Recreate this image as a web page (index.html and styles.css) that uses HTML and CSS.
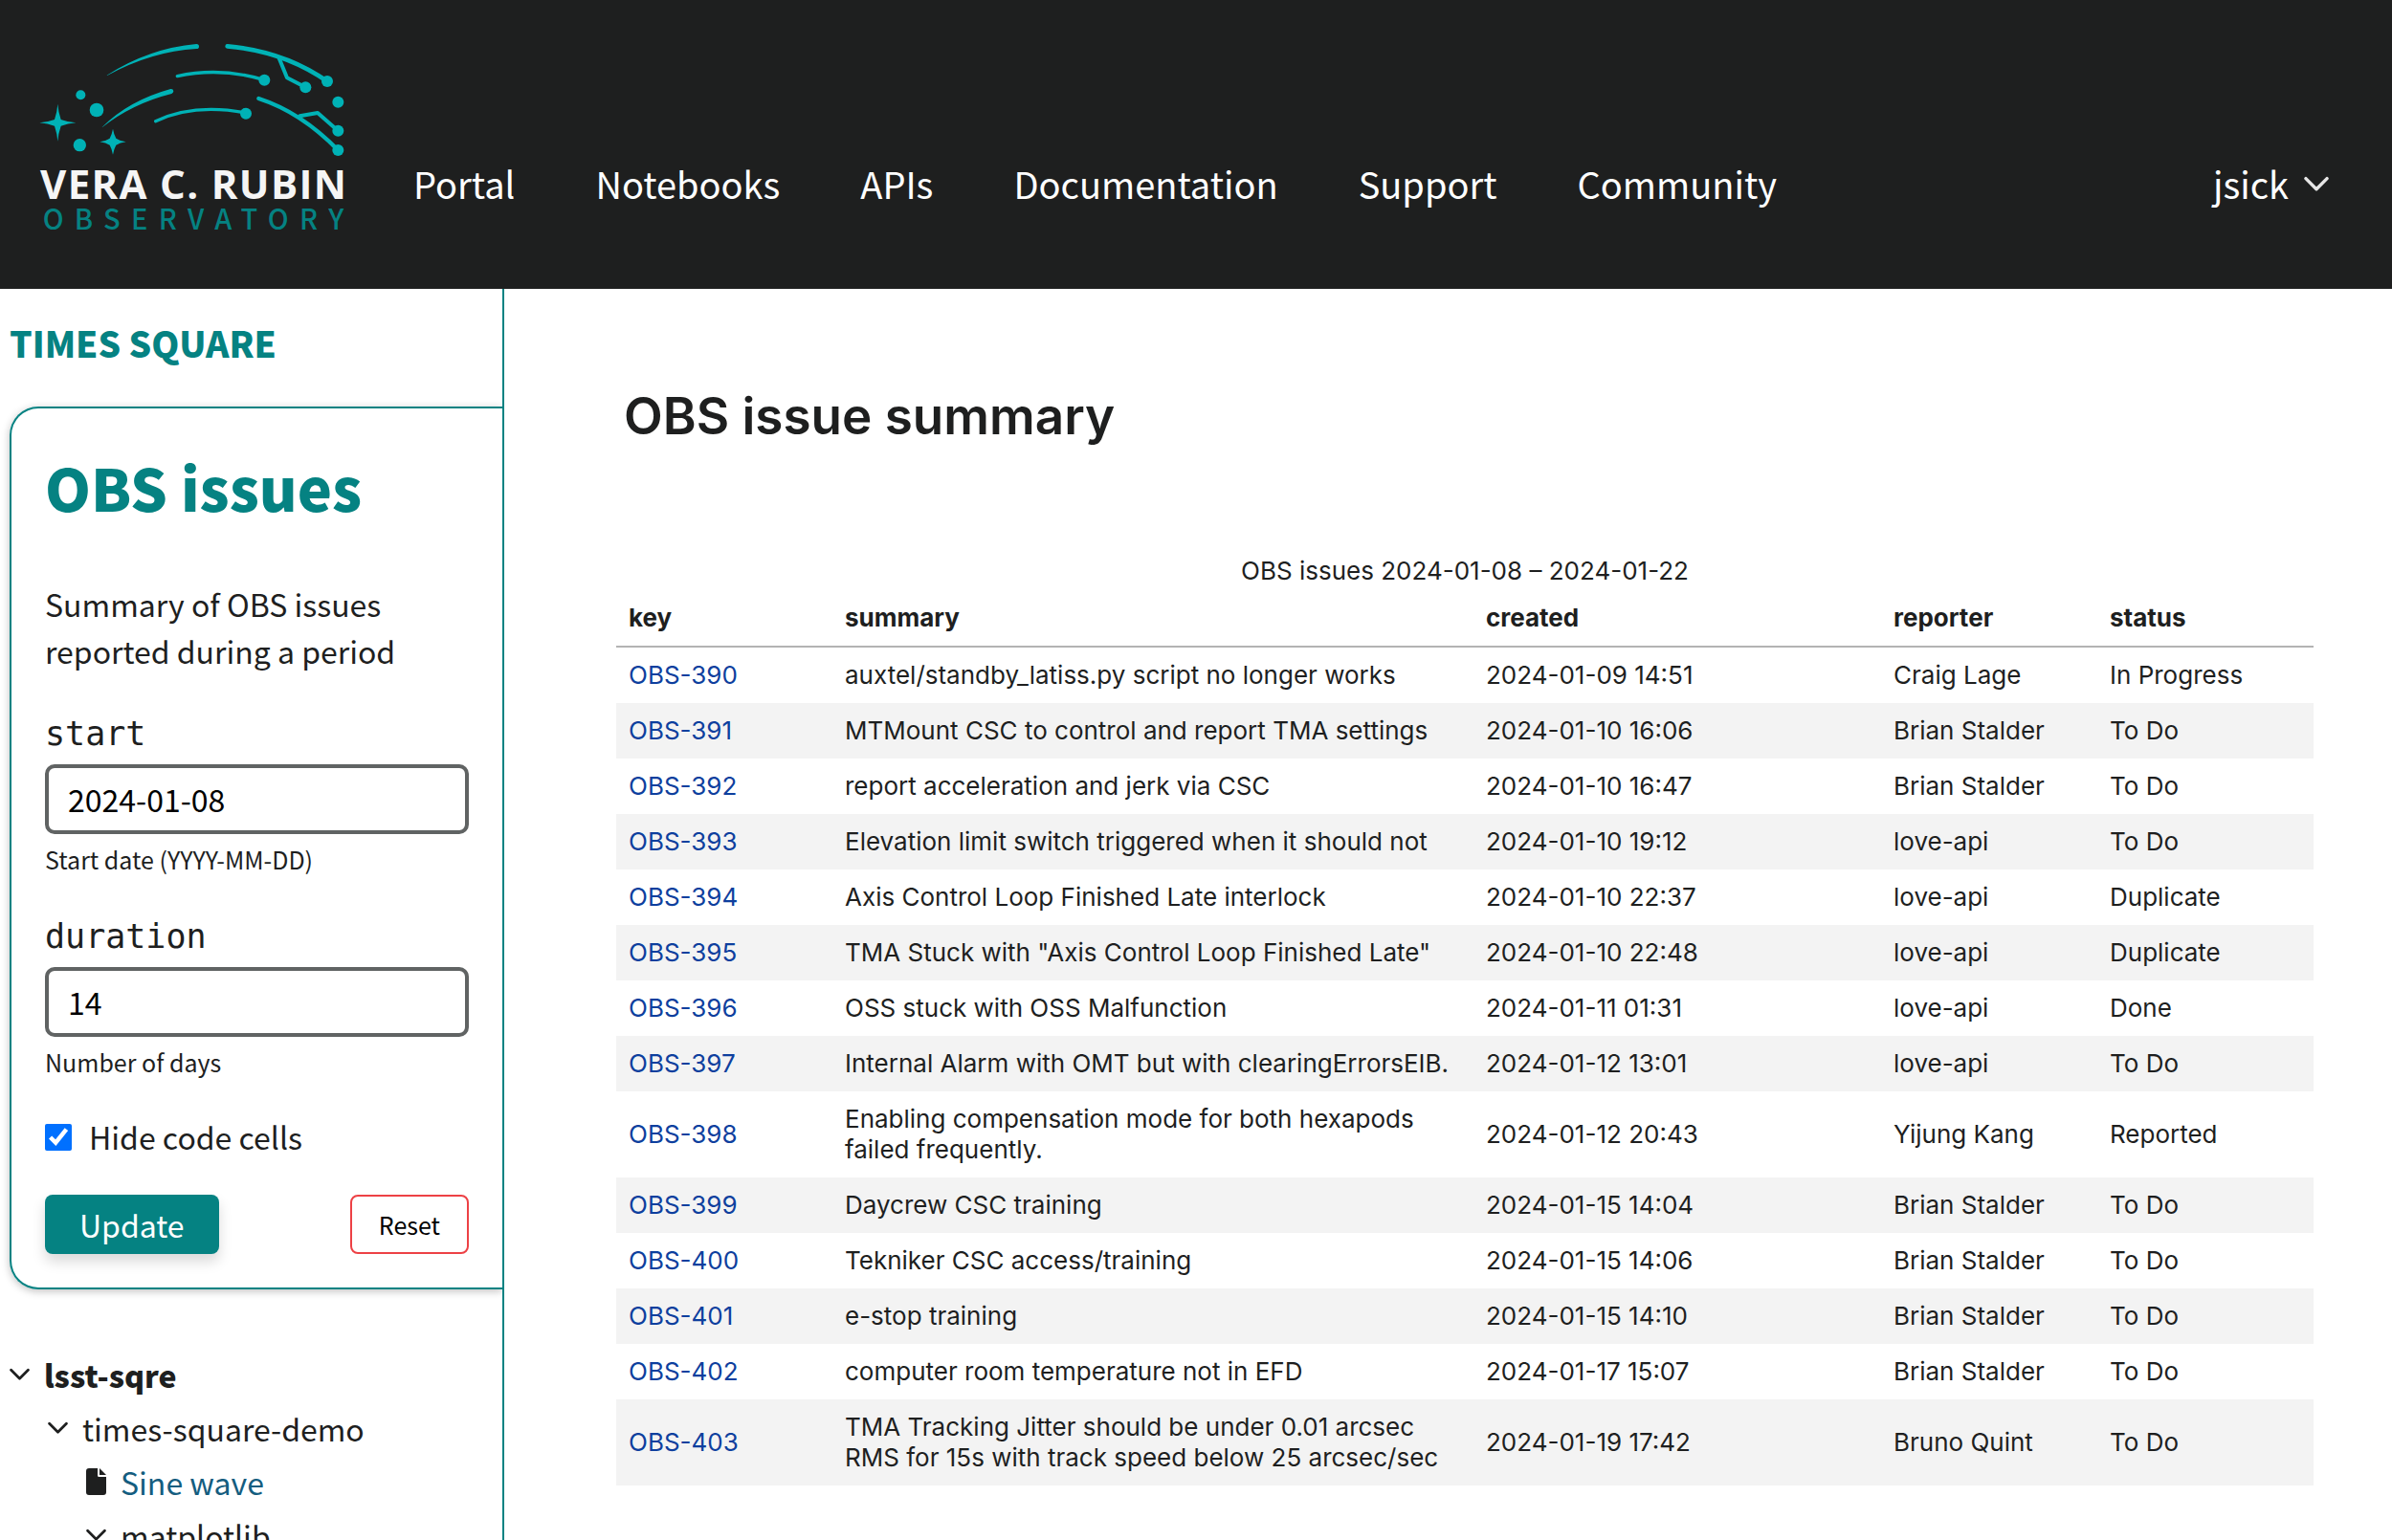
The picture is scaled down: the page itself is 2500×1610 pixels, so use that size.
FILE: index.html
```html
<!DOCTYPE html>
<html lang="en">
<head>
<meta charset="utf-8">
<meta name="viewport" content="width=device-width, initial-scale=1">
<title>OBS issues | Times Square</title>
<link rel="stylesheet" href="styles.css">
</head>
<body>
<svg width="0" height="0" class="sprite" aria-hidden="true">
  <symbol id="chevron" viewBox="0 0 20 13"><path d="M1.500 2 10 10.500 18.500 2" fill="none" stroke="currentColor" stroke-width="2.600" stroke-linecap="round" stroke-linejoin="round"/></symbol>
  <symbol id="file" viewBox="0 0 21 28"><path d="M3 0H12V7.500Q12 9 13.500 9H21V25Q21 28 18 28H3Q0 28 0 25V3Q0 0 3 0Z" fill="currentColor"/><path d="M14 0 21 7H14Z" fill="currentColor"/></symbol>
</svg>

<header class="site-header">
  <a class="logo" href="#" aria-label="Vera C. Rubin Observatory">
    <svg viewBox="0 0 1080 690" class="logo-art">
      <g fill="#00b2b6">
        <path d="M121 236Q123 262 131 285Q152 293 178 295Q152 297 131 305Q123 328 121 353Q119 328 111 305Q90 297 64 295Q90 293 111 285Q119 262 121 236Z"/>
        <path d="M294 314Q297 332 304 344Q316 352 335 355Q316 358 304 365Q297 377 294 395Q291 377 284 365Q272 358 253 355Q272 352 284 344Q291 332 294 314Z"/>
        <circle cx="193" cy="208" r="15"/><circle cx="243" cy="255" r="22"/><circle cx="190" cy="365" r="20"/>
        <circle cx="769" cy="161" r="18"/><circle cx="711" cy="266" r="18"/>
        <circle cx="966" cy="165" r="18"/><circle cx="898" cy="184" r="18"/><circle cx="1000" cy="230" r="18"/>
        <circle cx="1000" cy="320" r="18"/><circle cx="1000" cy="381" r="18"/>
        <path d="M275 146Q408 61 556 48Q564 48 564 56Q564 63 556 63Q415 71 276 147Z"/>
        <path d="M260 309Q342 226 475 189Q483 188 484 196Q484 201 478 204Q355 235 261 309Z"/>
      </g>
      <g fill="none" stroke="#00b2b6" stroke-linecap="round" stroke-linejoin="round">
        <path d="M496 149Q630 119 769 161" stroke-width="10"/>
        <path d="M428 290Q548 233 711 264" stroke-width="10"/>
        <path d="M653 55Q830 70 966 165" stroke-width="14"/>
        <path d="M814 90 840 154 898 184" stroke-width="12"/>
        <path d="M751 219Q884 262 1000 381" stroke-width="13"/>
        <path d="M880 274 936 264 1000 320" stroke-width="12"/>
      </g>
      <text x="66" y="533" class="logo-name">VERA C. RUBIN</text>
      <text x="74" y="630" class="logo-sub">OBSERVATORY</text>
    </svg>
  </a>
  <nav class="main-nav">
    <a href="#">Portal</a>
    <a href="#">Notebooks</a>
    <a href="#">APIs</a>
    <a href="#">Documentation</a>
    <a href="#">Support</a>
    <a href="#">Community</a>
  </nav>
  <button type="button" class="user-menu">jsick <svg class="user-chevron"><use href="#chevron"/></svg></button>
</header>

<div class="layout">
  <aside class="sidebar">
    <p class="app-name">Times Square</p>
    <form class="card">
      <h1>OBS issues</h1>
      <p class="description">Summary of OBS issues reported during a period</p>
      <div class="field">
        <label for="start">start</label>
        <input type="text" id="start" value="2024-01-08">
        <p class="help">Start date (YYYY-MM-DD)</p>
      </div>
      <div class="field">
        <label for="duration">duration</label>
        <input type="text" id="duration" value="14">
        <p class="help">Number of days</p>
      </div>
      <label class="check"><input type="checkbox" checked> Hide code cells</label>
      <div class="actions">
        <button type="submit" class="update">Update</button>
        <button type="reset" class="reset">Reset</button>
      </div>
    </form>
    <ul class="tree">
      <li>
        <div class="node root"><svg class="caret"><use href="#chevron"/></svg>lsst-sqre</div>
        <ul>
          <li>
            <div class="node"><svg class="caret"><use href="#chevron"/></svg>times-square-demo</div>
            <ul>
              <li class="node"><svg class="file"><use href="#file"/></svg><a href="#">Sine wave</a></li>
              <li class="node"><svg class="caret"><use href="#chevron"/></svg>matplotlib</li>
            </ul>
          </li>
        </ul>
      </li>
    </ul>
  </aside>

  <main class="notebook">
    <h2>OBS issue summary</h2>
    <table>
      <caption>OBS issues 2024-01-08 – 2024-01-22</caption>
      <colgroup><col class="narrow"><col><col class="wide"><col class="narrow"><col class="narrow"></colgroup>
      <thead>
        <tr><th scope="col">key</th><th scope="col">summary</th><th scope="col">created</th><th scope="col">reporter</th><th scope="col">status</th></tr>
      </thead>
      <tbody>
        <tr><td><a href="#">OBS-390</a></td><td>auxtel/standby_latiss.py script no longer works</td><td>2024-01-09 14:51</td><td>Craig Lage</td><td>In Progress</td></tr>
        <tr><td><a href="#">OBS-391</a></td><td>MTMount CSC to control and report TMA settings</td><td>2024-01-10 16:06</td><td>Brian Stalder</td><td>To Do</td></tr>
        <tr><td><a href="#">OBS-392</a></td><td>report acceleration and jerk via CSC</td><td>2024-01-10 16:47</td><td>Brian Stalder</td><td>To Do</td></tr>
        <tr><td><a href="#">OBS-393</a></td><td>Elevation limit switch triggered when it should not</td><td>2024-01-10 19:12</td><td>love-api</td><td>To Do</td></tr>
        <tr><td><a href="#">OBS-394</a></td><td>Axis Control Loop Finished Late interlock</td><td>2024-01-10 22:37</td><td>love-api</td><td>Duplicate</td></tr>
        <tr><td><a href="#">OBS-395</a></td><td>TMA Stuck with "Axis Control Loop Finished Late"</td><td>2024-01-10 22:48</td><td>love-api</td><td>Duplicate</td></tr>
        <tr><td><a href="#">OBS-396</a></td><td>OSS stuck with OSS Malfunction</td><td>2024-01-11 01:31</td><td>love-api</td><td>Done</td></tr>
        <tr><td><a href="#">OBS-397</a></td><td>Internal Alarm with OMT but with clearingErrorsEIB.</td><td>2024-01-12 13:01</td><td>love-api</td><td>To Do</td></tr>
        <tr><td><a href="#">OBS-398</a></td><td>Enabling compensation mode for both hexapods failed frequently.</td><td>2024-01-12 20:43</td><td>Yijung Kang</td><td>Reported</td></tr>
        <tr><td><a href="#">OBS-399</a></td><td>Daycrew CSC training</td><td>2024-01-15 14:04</td><td>Brian Stalder</td><td>To Do</td></tr>
        <tr><td><a href="#">OBS-400</a></td><td>Tekniker CSC access/training</td><td>2024-01-15 14:06</td><td>Brian Stalder</td><td>To Do</td></tr>
        <tr><td><a href="#">OBS-401</a></td><td>e-stop training</td><td>2024-01-15 14:10</td><td>Brian Stalder</td><td>To Do</td></tr>
        <tr><td><a href="#">OBS-402</a></td><td>computer room temperature not in EFD</td><td>2024-01-17 15:07</td><td>Brian Stalder</td><td>To Do</td></tr>
        <tr><td><a href="#">OBS-403</a></td><td>TMA Tracking Jitter should be under 0.01 arcsec RMS for 15s with track speed below 25 arcsec/sec</td><td>2024-01-19 17:42</td><td>Bruno Quint</td><td>To Do</td></tr>
      </tbody>
    </table>
  </main>
</div>
</body>
</html>
```
FILE: styles.css
```css
:root {
  --teal: #058282;
  --ink: #1e1f1f;
  --sans: "Noto Sans CJK SC", "Noto Sans", sans-serif;
  --mono: "DejaVu Sans Mono", monospace;
}

* { box-sizing: border-box; }

body {
  margin: 0;
  height: 100vh;
  overflow: hidden;
  display: flex;
  flex-direction: column;
  background: #fff;
  color: var(--ink);
  font-family: var(--sans);
  font-size: 32px;
  line-height: 49px;
}

h1, h2, p, ul { margin: 0; padding: 0; }
ul { list-style: none; }
a { text-decoration: none; }
button, input { font-family: inherit; }
.sprite { position: absolute; }

/* Header */
.site-header {
  flex: none;
  display: flex;
  align-items: flex-end;
  padding: 30px 66px 42px 20px;
  background: var(--ink);
}
.logo { display: block; }
.logo-art { display: block; width: 360px; height: 230px; }
.logo-name {
  font-family: "Open Sans", sans-serif;
  font-size: 126px;
  font-weight: 700;
  letter-spacing: 4px;
  fill: #f5f5f5;
}
.logo-sub {
  font-family: var(--sans);
  font-size: 87px;
  font-weight: 500;
  letter-spacing: 34px;
  fill: var(--teal);
}
.main-nav {
  display: flex;
  flex: 1;
  gap: 84px;
  padding-left: 52px;
}
.main-nav, .user-menu {
  margin-bottom: 40px;
  font-size: 38px;
  line-height: 56px;
}
.main-nav a, .user-menu { color: #fff; }
.user-menu {
  display: flex;
  align-items: center;
  gap: 16px;
  padding: 0;
  border: 0;
  background: none;
}
.user-chevron { width: 26px; height: 17px; color: #e6e6e6; }

/* Sidebar */
.layout { display: flex; flex: 1; min-height: 0; }
.sidebar {
  flex: none;
  width: 527px;
  padding: 32px 0 0 10px;
  border-right: 2px solid var(--teal);
  overflow: hidden;
}
.app-name {
  color: var(--teal);
  font-size: 37px;
  font-weight: 900;
  line-height: 49px;
  text-transform: uppercase;
}
.card {
  margin-top: 42px;
  padding: 46px 35px 35px;
  border: 2px solid var(--teal);
  border-right: 0;
  border-radius: 30px 0 0 30px;
  box-shadow: 0 2px 8px rgba(0, 0, 0, 0.25);
}
.card h1 {
  color: var(--teal);
  font-size: 61px;
  font-weight: 900;
  line-height: 72px;
}
.description { margin-top: 62px; }
.field { margin-top: 30px; }
.field label {
  display: block;
  font-family: var(--mono);
  font-size: 35px;
  line-height: 64px;
}
.field input {
  display: block;
  width: 100%;
  height: 73px;
  padding: 0 20px 2px;
  border: 4px solid #606363;
  border-radius: 10px;
  background: #fff;
  color: #000;
  font-size: 32px;
}
.help {
  margin-top: 7px;
  font-size: 25px;
  line-height: 38px;
}
.check {
  display: flex;
  align-items: center;
  gap: 18px;
  margin-top: 35px;
}
.check input {
  width: 28px;
  height: 28px;
  margin: 0;
  accent-color: #0070ff;
}
.actions {
  display: flex;
  justify-content: space-between;
  margin-top: 36px;
}
.actions button { height: 62px; border-radius: 8px; }
.update {
  padding: 0 36px;
  border: 0;
  background: var(--teal);
  color: #fff;
  font-size: 32px;
  box-shadow: 0 8px 14px rgba(0, 0, 0, 0.15);
}
.reset {
  padding: 0 28px;
  border: 2px solid #ed4145;
  background: #fff;
  color: #000;
  font-size: 25px;
}

/* Notebook tree */
.tree { margin-top: 61px; line-height: 56px; }
.tree ul { padding-left: 40px; }
.node { display: flex; align-items: center; gap: 15px; }
.root { font-weight: 900; }
.caret { width: 21px; height: 14px; }
.file { width: 21px; height: 28px; }
.node a { color: #145d7f; }

/* Rendered notebook */
.notebook {
  flex: 1;
  min-width: 0;
  padding: 96px 82px 0 117px;
  font-family: Inter, sans-serif;
  font-size: 26px;
  line-height: 32px;
}
.notebook h2 {
  padding-left: 8px;
  font-size: 53px;
  font-weight: 600;
  line-height: 74px;
}
table {
  width: 100%;
  margin-top: 109px;
  border-spacing: 0;
  table-layout: fixed;
}
caption { padding-bottom: 4px; }
.narrow { width: 226px; }
.wide { width: 426px; }
th, td { padding: 13px; text-align: left; }
th { border-bottom: 2px solid #b3b3b3; font-weight: 700; }
tbody tr:nth-child(even) { background: #f3f3f3; }
td a { color: #0e3f9e; }
```
